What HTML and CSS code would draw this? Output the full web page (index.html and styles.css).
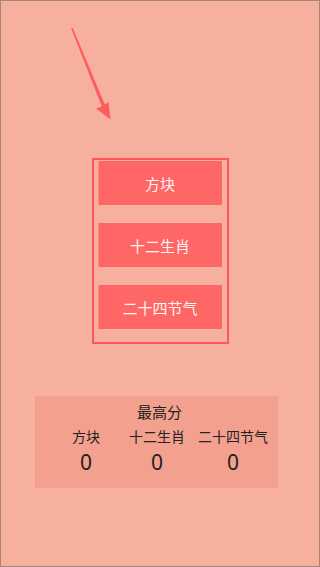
FILE: index.html
```html
<!DOCTYPE html>
<html lang="zh">
<head>
<meta charset="utf-8">
<link rel="stylesheet" href="styles.css">
</head>
<body>
<div class="screen">
  <svg class="arrow" width="60" height="105" viewBox="0 0 60 105">
    <path d="M11.2 8.4 L12.6 7.6 L45.4 86 L42.2 87.5 Z" fill="#ff5c5c"/>
    <path d="M50.5 99.5 L36 88.5 L42 86.5 L48.5 82 Z" fill="#ff5c5c"/>
  </svg>
  <div class="frame">
    <div class="btn">方块</div>
    <div class="btn">十二生肖</div>
    <div class="btn">二十四节气</div>
  </div>
  <div class="scores">
    <div class="title">最高分</div>
    <div class="grid">
      <div class="label">方块</div>
      <div class="label">十二生肖</div>
      <div class="label">二十四节气</div>
      <div class="num">0</div>
      <div class="num">0</div>
      <div class="num">0</div>
    </div>
  </div>
</div>
</body>
</html>
```
FILE: styles.css
```css
html, body {
  margin: 0;
  padding: 0;
}
body {
  font-family: "Noto Sans", "Noto Sans CJK SC", sans-serif;
  background: #f7b09d;
}
.screen {
  width: 320px;
  height: 567px;
  box-sizing: border-box;
  border: 1px solid #a8837a;
  background: #f7b09d;
  overflow: hidden;
}
.arrow {
  display: block;
  margin-left: 59px;
  margin-top: 19px;
}
.frame {
  margin-left: 91px;
  margin-top: 33px;
  width: 137px;
  height: 186px;
  box-sizing: border-box;
  border: 2px solid #ff5757;
  padding: 1px 5px 0 4px;
  display: flex;
  flex-direction: column;
  gap: 18px;
}
.btn {
  height: 44px;
  background: #ff6666;
  color: #fff5f2;
  font-size: 15px;
  display: flex;
  align-items: center;
  justify-content: center;
  box-shadow: inset 1px 0 0 #ff8a80;
}
.scores {
  margin-left: 34px;
  margin-top: 52px;
  width: 243px;
  height: 92px;
  background: #f3a18e;
  color: #222;
}
.title {
  text-align: center;
  font-size: 15px;
  line-height: 20px;
  padding-top: 6px;
  padding-left: 6px;
}
.grid {
  display: grid;
  grid-template-columns: 70px 72px 80px;
  padding-left: 16px;
  margin-top: 5px;
}
.label {
  text-align: center;
  font-size: 14px;
  line-height: 20px;
}
.num {
  text-align: center;
  font-size: 21px;
  line-height: 26px;
  margin-top: 2px;
}
```
